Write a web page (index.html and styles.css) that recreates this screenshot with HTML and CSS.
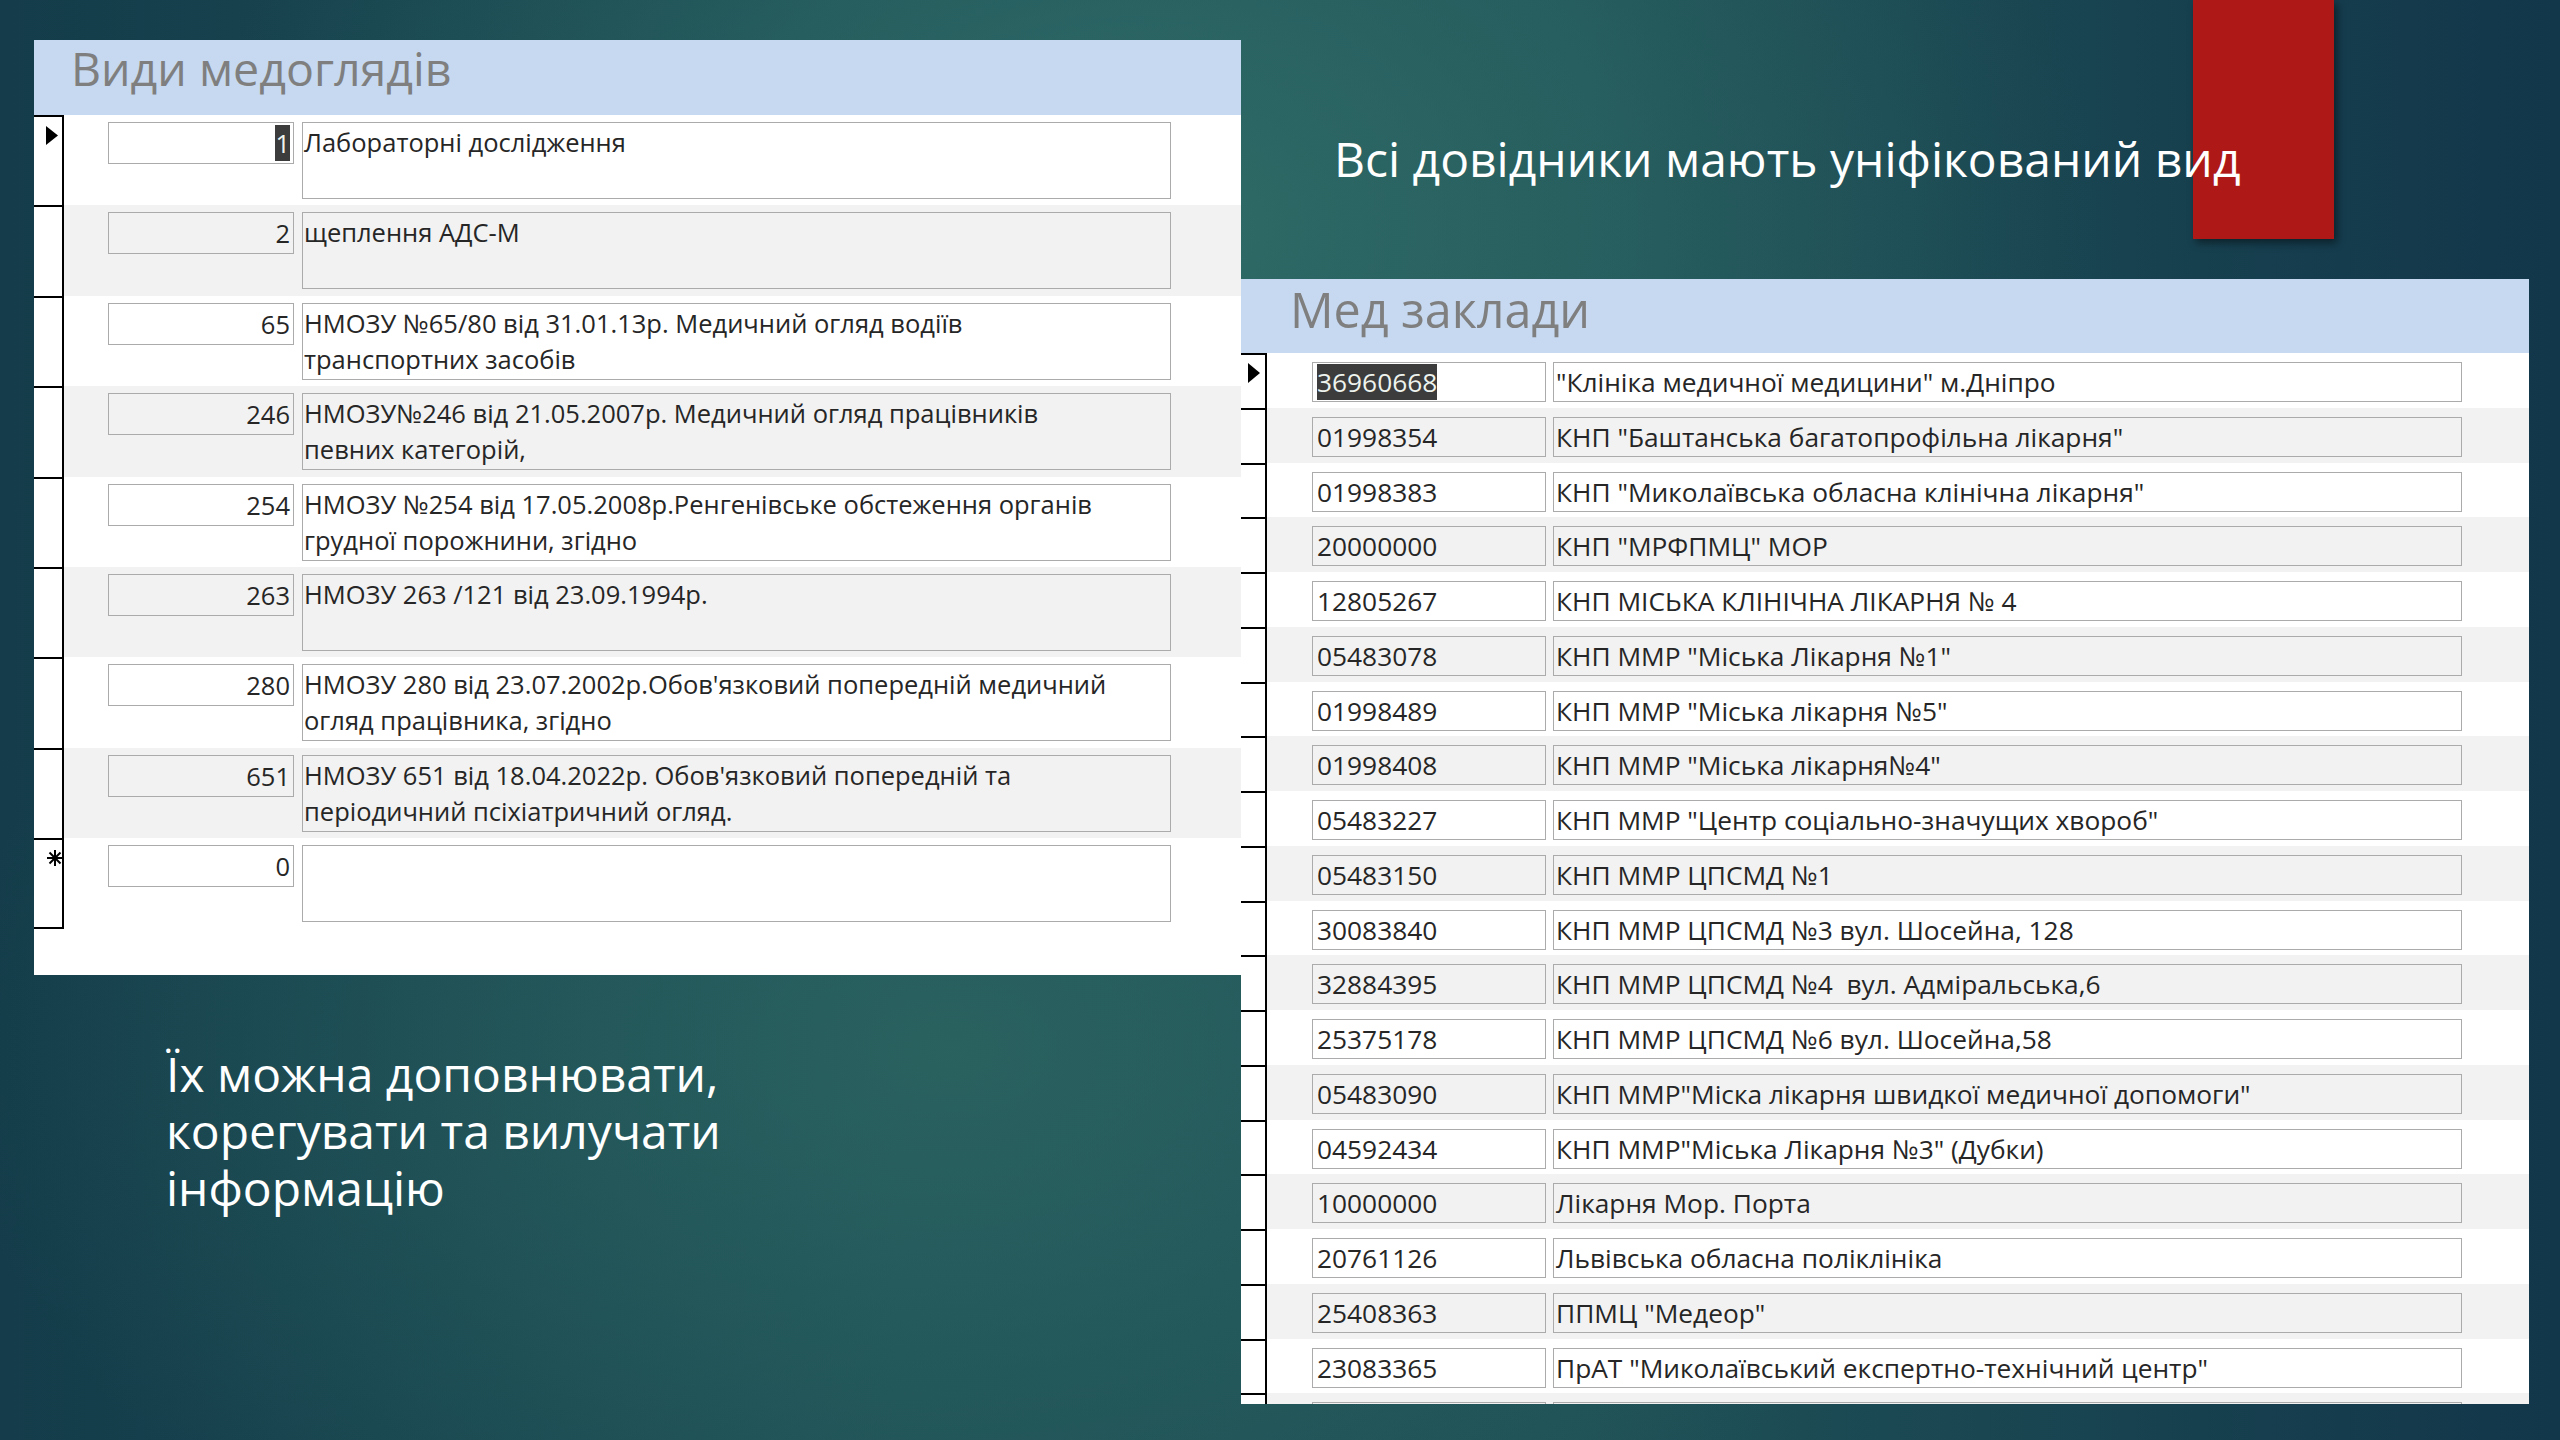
FILE: index.html
```html
<!DOCTYPE html>
<html lang="uk">
<head>
<meta charset="UTF-8">
<title>Довідники</title>
<link rel="stylesheet" href="styles.css">
</head>
<body>

<div class="slide">

<div class="col-left">
  <div class="panel panel-left">
    <div class="panel-head">Види медоглядів</div>
    <div class="rows">
      <div class="row">
        <div class="sel"><svg class="arrow" width="12" height="19" viewBox="0 0 12 19"><polygon points="0,0 12,9.5 0,19" fill="#000"/></svg></div>
        <div class="rec"><div class="fid"><span class="hl">1</span></div><div class="ftext">Лабораторні дослідження</div></div>
      </div>
      <div class="row alt">
        <div class="sel"></div>
        <div class="rec"><div class="fid">2</div><div class="ftext">щеплення АДС-М</div></div>
      </div>
      <div class="row">
        <div class="sel"></div>
        <div class="rec"><div class="fid">65</div><div class="ftext">НМОЗУ №65/80 від 31.01.13р. Медичний огляд водіїв<br>транспортних засобів</div></div>
      </div>
      <div class="row alt">
        <div class="sel"></div>
        <div class="rec"><div class="fid">246</div><div class="ftext">НМОЗУ№246 від 21.05.2007р. Медичний огляд працівників<br>певних категорій,</div></div>
      </div>
      <div class="row">
        <div class="sel"></div>
        <div class="rec"><div class="fid">254</div><div class="ftext">НМОЗУ №254 від 17.05.2008р.Ренгенівське обстеження органів<br>грудної порожнини, згідно</div></div>
      </div>
      <div class="row alt">
        <div class="sel"></div>
        <div class="rec"><div class="fid">263</div><div class="ftext">НМОЗУ 263 /121 від 23.09.1994р.</div></div>
      </div>
      <div class="row">
        <div class="sel"></div>
        <div class="rec"><div class="fid">280</div><div class="ftext">НМОЗУ 280 від 23.07.2002р.Обов'язковий попередній медичний<br>огляд працівника, згідно</div></div>
      </div>
      <div class="row alt">
        <div class="sel"></div>
        <div class="rec"><div class="fid">651</div><div class="ftext">НМОЗУ 651 від 18.04.2022р. Обов'язковий попередній та<br>періодичний псіхіатричний огляд.</div></div>
      </div>
      <div class="row new">
        <div class="sel"><svg class="star" width="18" height="18" viewBox="0 0 18 18"><g stroke="#000" stroke-width="2"><line x1="9" y1="1" x2="9" y2="17"/><line x1="1" y1="9" x2="17" y2="9"/><line x1="3.5" y1="3.5" x2="14.5" y2="14.5"/><line x1="14.5" y1="3.5" x2="3.5" y2="14.5"/></g></svg></div>
        <div class="rec"><div class="fid">0</div><div class="ftext"></div></div>
      </div>
    </div>
  </div>

  <p class="note">Їх можна доповнювати,<br>корегувати та вилучати<br>інформацію</p>
</div>

<div class="col-right">
  <div class="redbar"></div>
  <h2 class="headline">Всі довідники мають уніфікований вид</h2>

  <div class="panel panel-right">
    <div class="panel-head">Мед заклади</div>
    <div class="rows">
      <div class="row"><div class="sel"><svg class="arrow" width="12" height="20" viewBox="0 0 12 20"><polygon points="0,0 12,10 0,20" fill="#000"/></svg></div><div class="rec"><div class="fid"><span class="hl">36960668</span></div><div class="fname">"Клініка медичної медицини" м.Дніпро</div></div></div>
      <div class="row alt"><div class="sel"></div><div class="rec"><div class="fid">01998354</div><div class="fname">КНП "Баштанська багатопрофільна лікарня"</div></div></div>
      <div class="row"><div class="sel"></div><div class="rec"><div class="fid">01998383</div><div class="fname">КНП "Миколаївська обласна клінічна лікарня"</div></div></div>
      <div class="row alt"><div class="sel"></div><div class="rec"><div class="fid">20000000</div><div class="fname">КНП "МРФПМЦ" МОР</div></div></div>
      <div class="row"><div class="sel"></div><div class="rec"><div class="fid">12805267</div><div class="fname">КНП МІСЬКА КЛІНІЧНА ЛІКАРНЯ № 4</div></div></div>
      <div class="row alt"><div class="sel"></div><div class="rec"><div class="fid">05483078</div><div class="fname">КНП ММР "Міська Лікарня №1"</div></div></div>
      <div class="row"><div class="sel"></div><div class="rec"><div class="fid">01998489</div><div class="fname">КНП ММР "Міська лікарня №5"</div></div></div>
      <div class="row alt"><div class="sel"></div><div class="rec"><div class="fid">01998408</div><div class="fname">КНП ММР "Міська лікарня№4"</div></div></div>
      <div class="row"><div class="sel"></div><div class="rec"><div class="fid">05483227</div><div class="fname">КНП ММР "Центр соціально-значущих хвороб"</div></div></div>
      <div class="row alt"><div class="sel"></div><div class="rec"><div class="fid">05483150</div><div class="fname">КНП ММР ЦПСМД №1</div></div></div>
      <div class="row"><div class="sel"></div><div class="rec"><div class="fid">30083840</div><div class="fname">КНП ММР ЦПСМД №3 вул. Шосейна, 128</div></div></div>
      <div class="row alt"><div class="sel"></div><div class="rec"><div class="fid">32884395</div><div class="fname">КНП ММР ЦПСМД №4&nbsp; вул. Адміральська,6</div></div></div>
      <div class="row"><div class="sel"></div><div class="rec"><div class="fid">25375178</div><div class="fname">КНП ММР ЦПСМД №6 вул. Шосейна,58</div></div></div>
      <div class="row alt"><div class="sel"></div><div class="rec"><div class="fid">05483090</div><div class="fname">КНП ММР"Міска лікарня швидкої медичної допомоги"</div></div></div>
      <div class="row"><div class="sel"></div><div class="rec"><div class="fid">04592434</div><div class="fname">КНП ММР"Міська Лікарня №3" (Дубки)</div></div></div>
      <div class="row alt"><div class="sel"></div><div class="rec"><div class="fid">10000000</div><div class="fname">Лікарня Мор. Порта</div></div></div>
      <div class="row"><div class="sel"></div><div class="rec"><div class="fid">20761126</div><div class="fname">Львівська обласна поліклініка</div></div></div>
      <div class="row alt"><div class="sel"></div><div class="rec"><div class="fid">25408363</div><div class="fname">ППМЦ "Медеор"</div></div></div>
      <div class="row"><div class="sel"></div><div class="rec"><div class="fid">23083365</div><div class="fname">ПрАТ "Миколаївський експертно-технічний центр"</div></div></div>
      <div class="row alt"><div class="sel"></div><div class="rec"><div class="fid"></div><div class="fname"></div></div></div>
    </div>
  </div>
</div>

</div>

</body>
</html>
```

FILE: styles.css
```css
html, body { margin:0; padding:0; }
body { width:2560px; height:1440px; overflow:hidden; font-family:"Open Sans", "Noto Sans", sans-serif; }

.slide {
  width:2560px; height:1440px; display:flex;
  background:
    radial-gradient(ellipse 950px 700px at 1150px 230px, rgba(50,112,106,0.85), rgba(50,112,106,0) 100%),
    radial-gradient(ellipse 1000px 650px at 950px 1050px, rgba(46,104,99,0.75), rgba(46,104,99,0) 100%),
    linear-gradient(90deg, #143c4a 0%, #1d4f56 35%, #1f5157 62%, #12364a 100%);
}

/* columns */
.col-left { width:1207px; padding:40px 0 0 34px; }
.col-right { width:1288px; position:relative; }

/* access-like panels */
.panel { background:#fff; }
.panel-left { height:935px; }
.panel-right { height:1125px; }
.panel-right .rows { height:1051px; overflow:hidden; }
.panel-head { height:75px; background:#c6d9f0; color:#7f7f7f; font-size:46.5px; line-height:56px; box-sizing:border-box; }
.panel-left .panel-head { padding-left:37px; }
.panel-right .panel-head { height:74px; padding:2px 0 0 49px; font-size:48.5px; }

.row { display:flex; background:#fff; }
.row.alt .rec { background:#f2f2f2; }
.sel { border-top:2px solid #000; border-right:2px solid #000; box-sizing:border-box; }
.rec { flex:1; display:flex; align-items:flex-start; background:#fff; color:#262626; line-height:36px; }

.fid, .ftext, .fname { border:1px solid #ababab; box-sizing:border-box; white-space:nowrap; background:inherit; }

.panel-left .row { height:90.4px; }
.panel-left .sel { width:30px; padding:9px 0 0 12px; }
.panel-left .row.new .sel { border-bottom:2px solid #000; }
.panel-left .rec { padding:7px 0 0 44px; gap:8px; font-size:25.5px; }
.panel-left .fid { width:186px; height:42px; text-align:right; padding:2px 3px 0 0; }
.panel-left .ftext { width:869px; height:77px; padding:1px 0 0 1px; }

.panel-right .row { height:54.75px; }
.panel-right .sel { width:26px; padding:8px 0 0 7px; }
.panel-right .rec { padding:9px 0 0 45px; gap:7px; font-size:26.3px; }
.panel-right .fid { width:234px; height:40px; padding:1px 0 0 4px; }
.panel-right .fname { width:909px; height:40px; padding:1px 0 0 2px; }

.arrow, .star { display:block; }
.hl { background:#3c3c3c; color:#eef3ee; display:inline-block; }

/* slide texts */
.redbar { position:absolute; left:952px; top:0; width:141px; height:239px; background:#ae1816; box-shadow:3px 4px 8px rgba(0,0,0,0.45); }
.headline { position:relative; margin:0; padding:130px 0 0 93px; height:279px; box-sizing:border-box; font-weight:normal; font-size:48px; line-height:57px; color:#fff; white-space:nowrap; }
.note { margin:70px 0 0 132px; font-size:48px; line-height:57px; color:#fff; }
```
